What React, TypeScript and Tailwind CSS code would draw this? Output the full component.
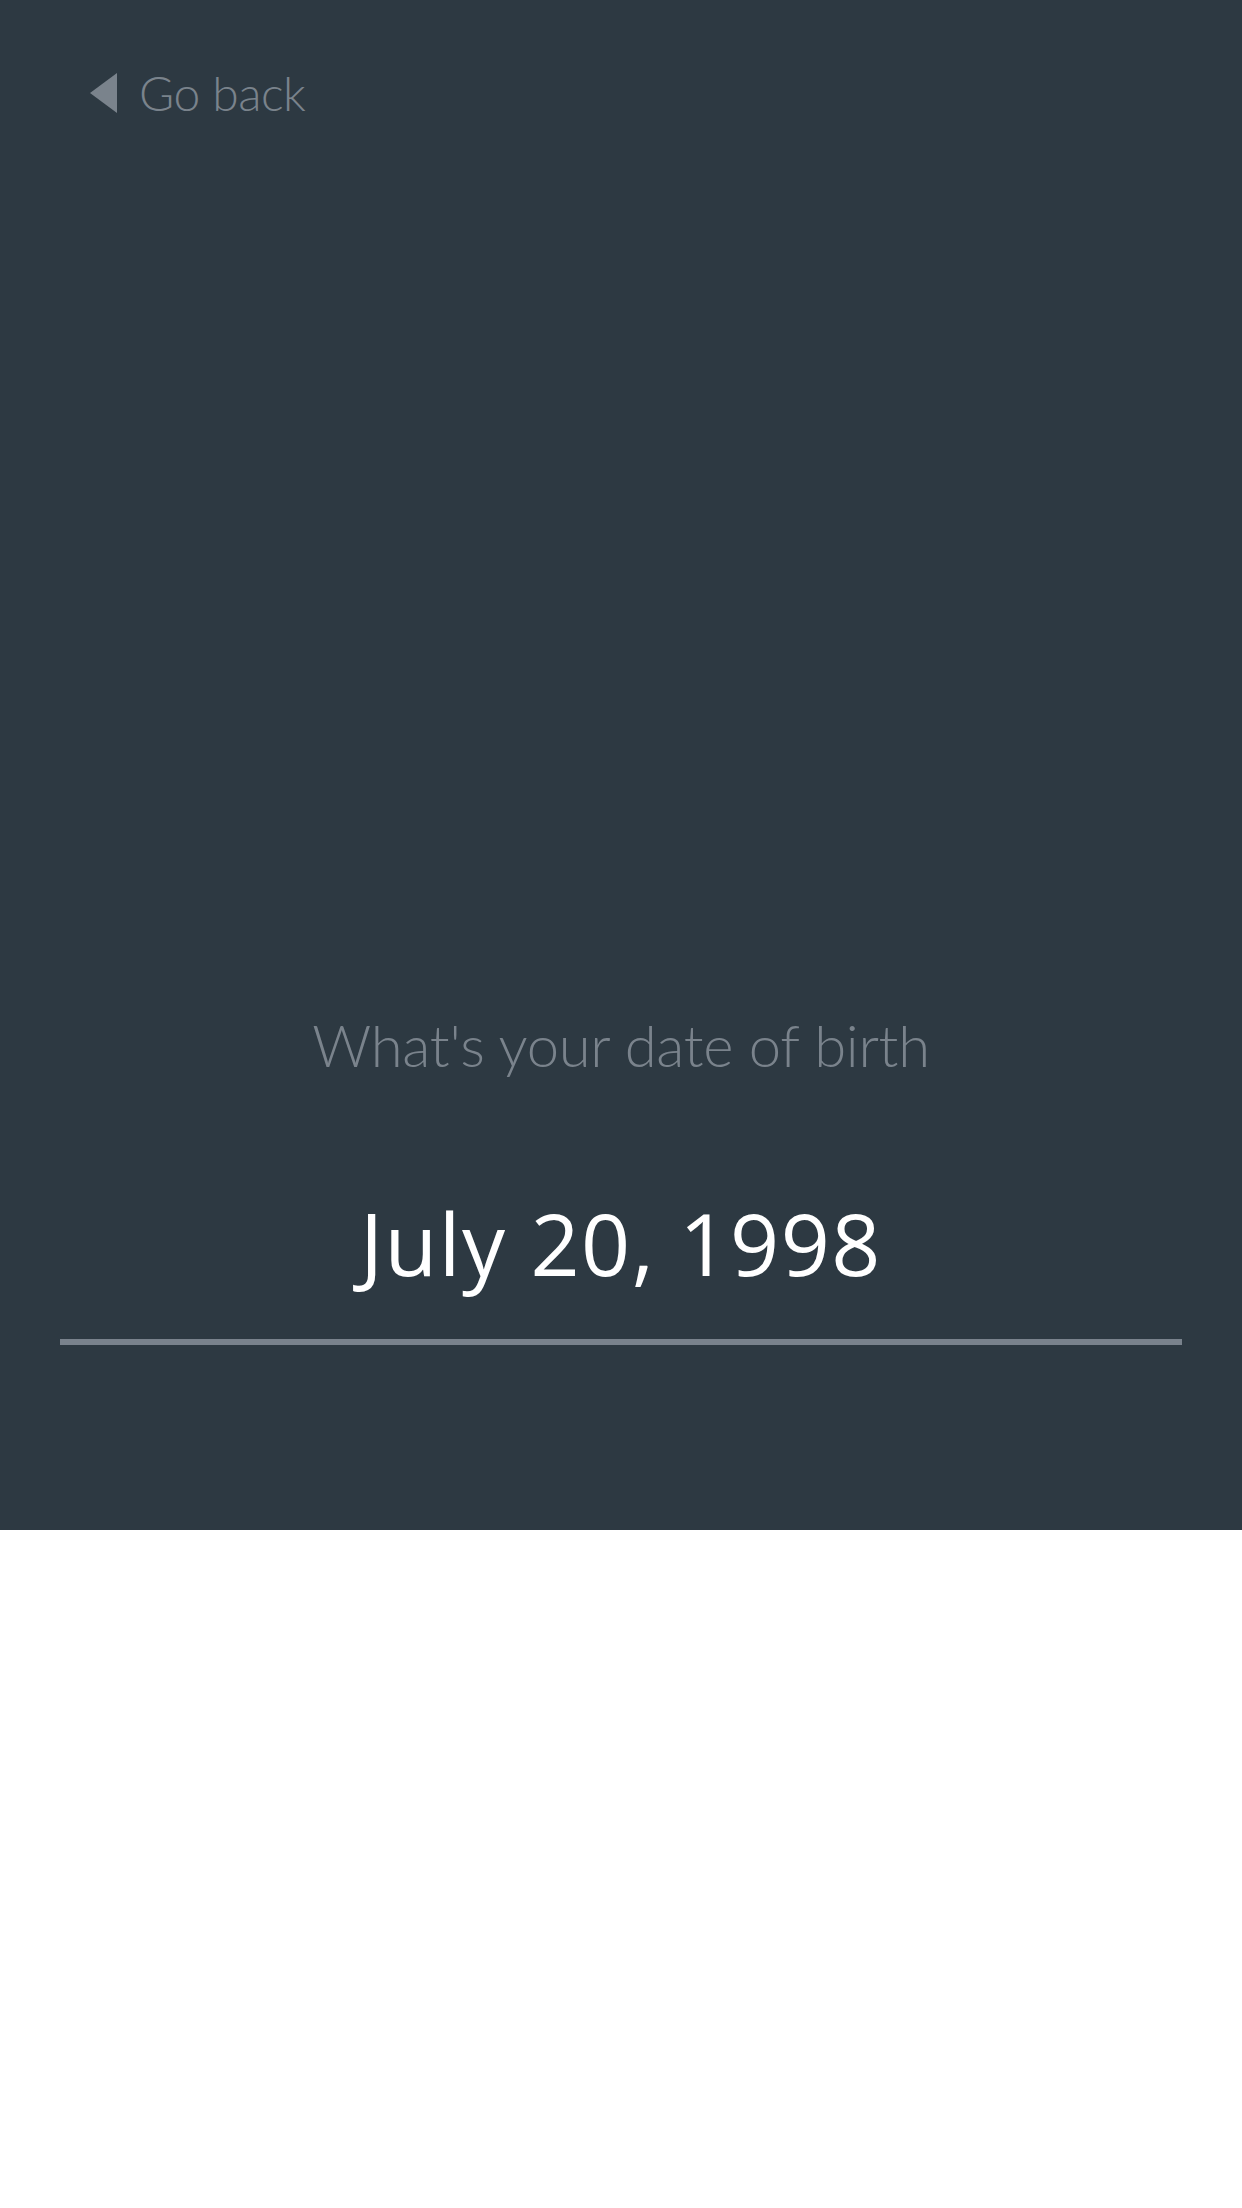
import React from 'react';

const App = () => {
  return (
    <div className="min-h-[2208px] w-full bg-white">
      {/* Birth date step */}
      <section className="h-[1530px] bg-[#2d3942] flex flex-col">
        <button className="mt-[69px] ml-[90px] flex items-center gap-[22px] self-start">
          <svg width="27" height="40" viewBox="0 0 27 40">
            <polygon points="27,0 27,40 0,20" fill="#7a838c" />
          </svg>
          <span className="font-['Lato',sans-serif] font-light text-[48px] leading-none text-[#7a838c] tracking-[-0.5px]">
            Go back
          </span>
        </button>

        <h2 className="mt-[899px] text-center font-['Lato',sans-serif] font-light text-[58px] leading-none text-[#7a838c] tracking-[-0.3px]">
          What's your date of birth
        </h2>

        <div className="mt-[126px] text-center font-['Open_Sans',sans-serif] font-medium text-[86px] leading-none text-white tracking-[1.5px]">
          July 20, 1998
        </div>

        <div className="mt-[53px] mx-[60px] h-[6px] bg-[#79828c]" />
      </section>
    </div>
  );
};

export default App;
